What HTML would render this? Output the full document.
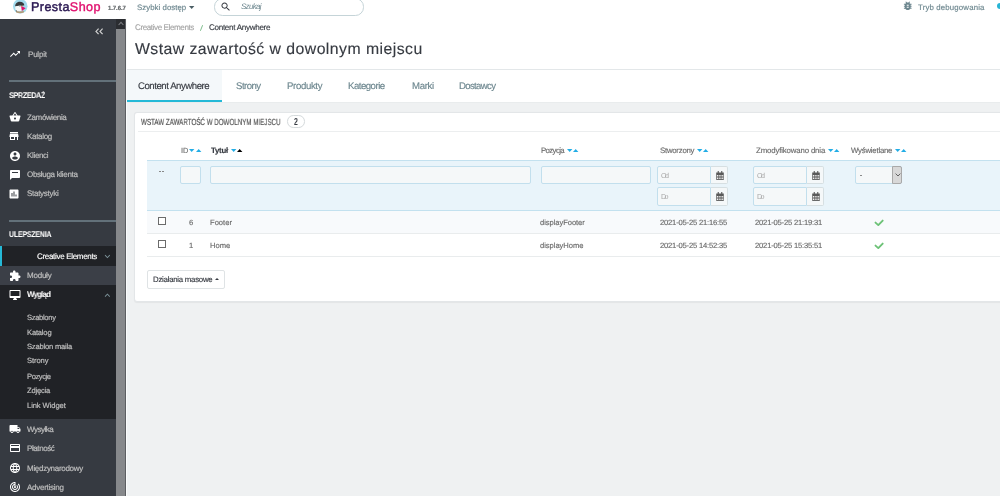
<!DOCTYPE html>
<html><head><meta charset="utf-8">
<title>Content Anywhere</title>
<style>
html,body{margin:0;padding:0;}
body{width:1000px;height:496px;overflow:hidden;position:relative;background:#eff1f2;font-family:"Liberation Sans",sans-serif;text-rendering:geometricPrecision;}
.tx{position:absolute;white-space:nowrap;z-index:5;will-change:transform;}
.shape{position:absolute;box-sizing:border-box;}
svg.shape{overflow:visible;}
.ic{fill:#fff;}
.inp{background:#f5f8f9;border:1px solid #c2dfed;border-radius:2px;}
.add{background:#f5f8f9;border:1px solid #d6dfe2;border-left:none;border-radius:0 2px 2px 0;}
.dn{width:0;height:0;border-left:2.6px solid transparent;border-right:2.6px solid transparent;border-top:2.8px solid #25b9d7;}
.up{width:0;height:0;border-left:2.6px solid transparent;border-right:2.6px solid transparent;border-bottom:2.8px solid #25b9d7;}
.cb{width:8px;height:8px;border:1px solid #6b6b6b;background:#fff;}
</style></head><body>
<!-- header -->
<div class="shape" style="left:0;top:0;width:1000px;height:19px;background:#fff;z-index:3"></div>
<!-- page header white -->
<div class="shape" style="left:126px;top:19px;width:874px;height:83.5px;background:#fff;"></div>
<div class="shape" style="left:126px;top:69px;width:874px;height:1px;background:#e3e7e9;"></div>
<div class="shape" style="left:127px;top:70px;width:95px;height:32px;background:#f4f8fa;"></div>
<div class="shape" style="left:126px;top:100px;width:96px;height:2px;background:#25b9d7;"></div>
<div class="shape" style="left:126px;top:102px;width:874px;height:1px;background:#e9eced;"></div>
<div class="shape" style="left:199.5px;top:24.5px;width:3px;height:6px;z-index:5"><svg width="3" height="6" viewBox="0 0 3 6" style="display:block"><path d="M2.6 0.2 L0.4 5.8" stroke="#70b580" stroke-width="0.9"/></svg></div>
<!-- sidebar -->
<div class="shape" style="left:0;top:19px;width:116px;height:477px;background:#363a41;"></div>
<div class="shape" style="left:9px;top:80px;width:107px;height:2px;background:#63717a;"></div>
<div class="shape" style="left:9px;top:220px;width:107px;height:2px;background:#63717a;"></div>
<div class="shape" style="left:0;top:246px;width:116px;height:19.5px;background:#202226;"></div>
<div class="shape" style="left:0;top:246px;width:2.2px;height:19.5px;background:#25b9d7;"></div>
<div class="shape" style="left:0;top:265.5px;width:116px;height:19.5px;background:#3b3f47;"></div>
<div class="shape" style="left:0;top:285px;width:116px;height:134px;background:#202226;"></div>
<!-- scrollbar -->
<div class="shape" style="left:116px;top:19px;width:9.3px;height:477px;background:#86888b;"></div>
<div class="shape" style="left:116px;top:19px;width:9.5px;height:9.6px;background:#2b2d31;"></div>
<svg class="shape" style="left:117.5px;top:21px" width="6" height="5" viewBox="0 0 6 5"><path d="M0.6 4 L3 1.4 L5.4 4" fill="none" stroke="#7a7c80" stroke-width="1.1"/></svg>
<div class="shape" style="left:125px;top:19px;width:1px;height:477px;background:#5c5e62;"></div><div class="shape" style="left:126px;top:19px;width:1px;height:477px;background:#fafbfb;"></div>
<!-- collapse -->
<svg class="shape" style="left:94.6px;top:27.6px" width="9" height="7" viewBox="0 0 9 7"><path d="M3.6 0.6 L1 3.4 L3.6 6.2 M7.6 0.6 L5 3.4 L7.6 6.2" fill="none" stroke="#d0d0d0" stroke-width="1.2"/></svg>
<!-- sidebar icons (material, 24 viewBox at 12px) -->
<svg class="shape ic" style="left:8.7px;top:48px" width="12" height="12" viewBox="0 0 24 24"><path d="M16 6l2.29 2.29-4.88 4.88-4-4L2 16.59 3.41 18l6-6 4 4 6.3-6.29L22 12V6z"/></svg>
<svg class="shape ic" style="left:8.5px;top:111px" width="12" height="12" viewBox="0 0 24 24"><path d="M17.21 9l-4.38-6.56c-.19-.28-.51-.42-.83-.42-.32 0-.64.14-.83.43L6.79 9H2c-.55 0-1 .45-1 1 0 .09.01.18.04.27l2.540 9.27c.23.84 1 1.46 1.92 1.46h13c.92 0 1.69-.62 1.93-1.46l2.54-9.27L23 10c0-.55-.45-1-1-1h-4.79zM9 9l3-4.4L15 9H9zm3 8c-1.1 0-2-.9-2-2s.9-2 2-2 2 .9 2 2-.9 2-2 2z"/></svg>
<svg class="shape ic" style="left:8.4px;top:130px" width="12" height="12" viewBox="0 0 24 24"><path d="M20 4H4v2h16V4zm1 10v-2l-1-5H4l-1 5v2h1v6h10v-6h4v6h2v-6h1zm-9 4H6v-4h6v4z"/></svg>
<svg class="shape ic" style="left:8.7px;top:149.8px" width="12" height="12" viewBox="0 0 24 24"><path d="M12 2C6.480 2 2 6.48 2 12s4.48 10 10 10 10-4.48 10-10S17.52 2 12 2zm0 3c1.66 0 3 1.34 3 3s-1.34 3-3 3-3-1.34-3-3 1.34-3 3-3zm0 14.2c-2.5 0-4.71-1.28-6-3.22.03-1.99 4-3.08 6-3.08 1.99 0 5.97 1.09 6 3.08-1.29 1.94-3.5 3.22-6 3.22z"/></svg>
<svg class="shape ic" style="left:8.7px;top:168.7px" width="12" height="12" viewBox="0 0 24 24"><path d="M20 2H4c-1.1 0-1.99.9-1.99 2L2 22l4-4h14c1.1 0 2-.9 2-2V4c0-1.1-.9-2-2-2zM18 8H6V6h12v2z"/></svg>
<svg class="shape ic" style="left:8.4px;top:187.5px" width="12" height="12" viewBox="0 0 24 24"><path d="M19 3H5c-1.1 0-2 .9-2 2v14c0 1.1.9 2 2 2h14c1.1 0 2-.9 2-2V5c0-1.1-.9-2-2-2zM9 17H7v-7h2v7zm4 0h-2V7h2v10zm4 0h-2v-4h2v4z"/></svg>
<svg class="shape ic" style="left:9px;top:269.8px" width="12" height="12" viewBox="0 0 24 24"><path d="M20.5 11H19V7c0-1.1-.9-2-2-2h-4V3.5C13 2.12 11.88 1 10.5 1S8 2.12 8 3.5V5H4c-1.1 0-1.99.9-1.99 2v3.8H3.5c1.49 0 2.7 1.21 2.7 2.7s-1.21 2.7-2.7 2.7H2V20c0 1.1.9 2 2 2h3.8v-1.5c0-1.490 1.21-2.7 2.7-2.7 1.49 0 2.7 1.21 2.7 2.7V22H17c1.1 0 2-.9 2-2v-4h1.5c1.38 0 2.5-1.12 2.5-2.5S21.88 11 20.5 11z"/></svg>
<svg class="shape ic" style="left:8.5px;top:289.2px" width="12" height="12" viewBox="0 0 24 24"><path d="M21 2H3c-1.1 0-2 .9-2 2v12c0 1.1.9 2 2 2h7l-2 3v1h8v-1l-2-3h7c1.1 0 2-.9 2-2V4c0-1.1-.9-2-2-2zm0 12H3V4h18v10z"/></svg>
<svg class="shape ic" style="left:9.4px;top:423.2px" width="12" height="12" viewBox="0 0 24 24"><path d="M20 8h-3V4H3c-1.1 0-2 .9-2 2v11h2c0 1.66 1.34 3 3 3s3-1.34 3-3h6c0 1.66 1.34 3 3 3s3-1.34 3-3h2v-5l-3-4zM6 18.5c-.83 0-1.5-.67-1.5-1.5s.67-1.5 1.5-1.5 1.5.67 1.5 1.5-.67 1.5-1.5 1.5zm13.5-9l1.96 2.5H17V9.5h2.5zm-1.5 9c-.83 0-1.5-.67-1.5-1.5s.67-1.5 1.5-1.5 1.5.67 1.5 1.5-.67 1.5-1.5 1.5z"/></svg>
<svg class="shape ic" style="left:8.5px;top:442.2px" width="12" height="12" viewBox="0 0 24 24"><path d="M20 4H4c-1.11 0-1.99.89-1.99 2L2 18c0 1.11.89 2 2 2h16c1.11 0 2-.89 2-2V6c0-1.11-.89-2-2-2zm0 14H4v-6h16v6zm0-10H4V6h16v2z"/></svg>
<svg class="shape ic" style="left:8.5px;top:461.8px" width="12" height="12" viewBox="0 0 24 24"><path d="M11.99 2C6.47 2 2 6.48 2 12s4.47 10 9.99 10C17.52 22 22 17.52 22 12S17.52 2 11.99 2zm6.93 6h-2.95c-.32-1.25-.78-2.45-1.38-3.56 1.84.63 3.37 1.91 4.33 3.56zM12 4.04c.83 1.2 1.48 2.53 1.91 3.96h-3.82c.43-1.43 1.08-2.76 1.91-3.96zM4.26 14C4.1 13.36 4 12.69 4 12s.1-1.36.26-2h3.38c-.08.66-.14 1.32-.14 2 0 .68.06 1.34.14 2H4.26zm.82 2h2.95c.32 1.25.78 2.45 1.38 3.56-1.84-.63-3.37-1.9-4.33-3.56zm2.95-8H5.08c.96-1.66 2.49-2.93 4.33-3.56C8.81 5.55 8.35 6.75 8.03 8zM12 19.96c-.83-1.2-1.48-2.53-1.91-3.96h3.82c-.43 1.43-1.08 2.76-1.910 3.96zM14.34 14H9.66c-.09-.66-.16-1.32-.16-2 0-.68.07-1.35.16-2h4.68c.09.65.16 1.32.16 2 0 .68-.07 1.34-.16 2zm.25 5.56c.6-1.11 1.06-2.31 1.38-3.56h2.95c-.96 1.65-2.49 2.93-4.33 3.56zM16.36 14c.08-.66.14-1.32.14-2 0-.68-.06-1.34-.14-2h3.38c.16.64.26 1.31.26 2s-.1 1.36-.26 2h-3.38z"/></svg>
<svg class="shape ic" style="left:8.5px;top:481px" width="12" height="12" viewBox="0 0 24 24"><path d="M19.07 4.93l-1.41 1.41C19.1 7.79 20 9.79 20 12c0 4.42-3.58 8-8 8s-8-3.58-8-8c0-4.08 3.05-7.44 7-7.93v2.02C8.16 6.57 6 9.03 6 12c0 3.31 2.69 6 6 6s6-2.69 6-6c0-1.66-.67-3.16-1.76-4.24l-1.41 1.41C15.55 9.9 16 10.9 16 12c0 2.21-1.79 4-4 4s-4-1.79-4-4c0-1.86 1.28-3.41 3-3.86v2.14c-.6.35-1 .98-1 1.72 0 1.1.9 2 2 2s2-.9 2-2c0-.74-.4-1.38-1-1.72V2h-1C6.48 2 2 6.48 2 12s4.48 10 10 10 10-4.48 10-10c0-2.76-1.12-5.26-2.93-7.07z"/></svg>
<svg class="shape" style="left:101.5px;top:250.6px" width="10.8" height="10.8" viewBox="0 0 24 24"><path fill="#7d939a" d="M7.41 8.59L12 13.17l4.590-4.58L18 10l-6 6-6-6 1.41-1.41z"/></svg>
<svg class="shape" style="left:101.5px;top:290.2px" width="10.8" height="10.8" viewBox="0 0 24 24"><path fill="#7d939a" d="M7.41 15.41L12 10.83l4.59 4.58L18 14l-6-6-6 6z"/></svg>
<!-- header content -->
<svg class="shape" style="left:12.6px;top:-0.9px;z-index:4" width="14.5" height="14.5" viewBox="0 0 24 24">
<circle cx="12" cy="12" r="12" fill="#a3dbed"/>
<path d="M3.6 12.5 C3.4 7.5 7 4.6 11.5 4.6 C15.5 4.6 18.4 6.8 18.8 10.5 L14.5 11.5 C11 10.5 7 11 3.6 12.5z" fill="#38393b"/>
<path d="M3.6 12.5 C7 11 11 10.5 14.5 11.5 L14.8 19.5 C11.5 20.5 7 20.3 4.6 19 C3.7 17 3.5 14.5 3.6 12.5z" fill="#f6f6f6"/>
<path d="M13.4 11 L20.9 15.3 L14.6 19.8z" fill="#e2116f"/>
<path d="M14.2 10.6 L15.6 10.8 L15.3 13.2 L14.3 12.8z" fill="#f1c46a"/>
<path d="M10 11.8 h2.8 v0.9 h-2.8z" fill="#8aa2ae"/>
<path d="M4.8 19.6 C8 21 14 21.2 18.2 19.6 L17.8 22.4 C14 24.2 9 24.2 5.4 22.4z" fill="#b59a76"/>
<path d="M4.6 18.6 L6.5 19.6 L6 20.6 L4.4 19.6z" fill="#333"/>
</svg>
<svg class="shape" style="left:189px;top:6px;z-index:4" width="5.4" height="3" viewBox="0 0 5.4 3"><path d="M0 0H5.4L2.7 3z" fill="#4a5d64"/></svg>
<div class="shape" style="left:213.8px;top:-1.7px;width:150px;height:17.2px;border:1px solid #c5d4d8;border-radius:8.6px;background:#fff;z-index:4"></div>
<svg class="shape" style="left:219.6px;top:1px;z-index:4" width="11.5" height="11.5" viewBox="0 0 24 24"><path fill="#363a41" d="M15.5 14h-.79l-.28-.27C15.41 12.59 16 11.11 16 9.5 16 5.910 13.09 3 9.5 3S3 5.91 3 9.5 5.91 16 9.5 16c1.61 0 3.09-.59 4.23-1.57l.27.28v.79l5 4.99L20.49 19l-4.99-5zm-6 0C7.01 14 5 11.99 5 9.5S7.01 5 9.5 5 14 7.01 14 9.5 11.99 14 9.5 14z"/></svg>
<svg class="shape" style="left:901.6px;top:0.4px;z-index:4" width="11.5" height="11.5" viewBox="0 0 24 24"><path fill="#6c868e" d="M20 8h-2.81c-.45-.78-1.07-1.45-1.82-1.96L17 4.41 15.59 3l-2.17 2.17C12.96 5.06 12.49 5 12 5c-.49 0-.96.06-1.41.17L8.41 3 7 4.41l1.62 1.63C7.88 6.55 7.26 7.22 6.81 8H4v2h2.09c-.05.33-.09.66-.09 1v1H4v2h2v1c0 .34.04.67.09 1H4v2h2.81c1.04 1.79 2.970 3 5.19 3s4.15-1.21 5.19-3H20v-2h-2.09c.05-.33.09-.66.09-1v-1h2v-2h-2v-1c0-.34-.04-.67-.09-1H20V8zm-6 8h-4v-2h4v2zm0-4h-4v-2h4v2z"/></svg>
<div class="shape" style="left:996.6px;top:2.8px;width:7px;height:6.3px;background:#28b5d5;border-radius:3.2px;z-index:4"></div>
<!-- panel -->
<div class="shape" style="left:134.2px;top:112.4px;width:880px;height:189.4px;background:#fff;border:1px solid #e3e6e8;border-radius:3px;box-shadow:0 0.5px 1px rgba(0,0,0,.05);"></div>
<div class="shape" style="left:137.6px;top:131.4px;width:870px;height:1px;background:#eceeef;"></div>
<div class="shape" style="left:287.1px;top:115px;width:17.7px;height:12.6px;border:1px solid #d5dadc;border-radius:6.3px;background:#fff;"></div>
<!-- filter row -->
<div class="shape" style="left:146.9px;top:160px;width:860px;height:50.5px;background:#e9f4fa;border-top:1px solid #c3e1ef;border-bottom:1px solid #c3e1ef;"></div>
<div class="shape" style="left:159px;top:171px;width:2px;height:0.9px;background:#888;"></div><div class="shape" style="left:161.8px;top:171px;width:2px;height:0.9px;background:#888;"></div>
<div class="shape inp" style="left:180.1px;top:165.7px;width:20.8px;height:18.6px;"></div>
<div class="shape inp" style="left:210.1px;top:165.7px;width:320.6px;height:18.6px;"></div>
<div class="shape inp" style="left:540.5px;top:165.7px;width:110.6px;height:18.6px;"></div>
<div class="shape inp" style="left:657.4px;top:166px;width:53.2px;height:18px;border-radius:2px 0 0 2px;"></div>
<div class="shape add" style="left:710.6px;top:166px;width:17.9px;height:18px;"></div>
<div class="shape inp" style="left:657.4px;top:187.4px;width:53.2px;height:18.4px;border-radius:2px 0 0 2px;"></div>
<div class="shape add" style="left:710.6px;top:187.4px;width:17.9px;height:18.4px;"></div>
<div class="shape inp" style="left:753.4px;top:166px;width:53.2px;height:18px;border-radius:2px 0 0 2px;"></div>
<div class="shape add" style="left:806.6px;top:166px;width:17.8px;height:18px;"></div>
<div class="shape inp" style="left:753.4px;top:187.4px;width:53.2px;height:18.4px;border-radius:2px 0 0 2px;"></div>
<div class="shape add" style="left:806.6px;top:187.4px;width:17.8px;height:18.4px;"></div>
<div class="shape inp" style="left:855.4px;top:166.4px;width:47px;height:17.2px;"></div>
<div class="shape" style="left:892.4px;top:166.4px;width:10px;height:17.2px;background:#d8d8d8;border:1px solid #a9a9a9;border-radius:0 2px 2px 0;"></div>
<svg class="shape" style="left:894.6px;top:172.5px" width="6" height="4" viewBox="0 0 6 4"><path d="M0.6 0.6 L3 3 L5.4 0.6" fill="none" stroke="#555" stroke-width="0.9"/></svg>
<div class="shape" style="left:860px;top:175px;width:1.8px;height:0.8px;background:#8a8a8a;"></div>
<!-- rows -->
<div class="shape" style="left:146.9px;top:210.5px;width:860px;height:22.8px;background:#f8fafc;"></div>
<div class="shape" style="left:146.9px;top:233px;width:860px;height:1px;background:#e9eced;"></div>
<div class="shape" style="left:146.9px;top:256px;width:860px;height:1px;background:#e9eced;"></div>
<div class="shape cb" style="left:158px;top:217.2px;"></div>
<div class="shape cb" style="left:158px;top:240.2px;"></div>
<svg class="shape" style="left:874px;top:219.4px" width="10" height="8" viewBox="0 0 10 8"><path d="M1.5 3.6 L4.3 6.1 L8.7 1.6" fill="none" stroke="#6dc277" stroke-width="1.9" stroke-linecap="round" stroke-linejoin="round"/></svg>
<svg class="shape" style="left:874px;top:242.4px" width="10" height="8" viewBox="0 0 10 8"><path d="M1.5 3.6 L4.3 6.1 L8.7 1.6" fill="none" stroke="#6dc277" stroke-width="1.9" stroke-linecap="round" stroke-linejoin="round"/></svg>
<!-- bulk button -->
<div class="shape" style="left:147.1px;top:270.2px;width:78px;height:18.8px;background:#fff;border:1px solid #dfe3e5;border-radius:2px;"></div>
<div class="shape" style="left:215px;top:278.2px;width:0;height:0;border-left:2.2px solid transparent;border-right:2.2px solid transparent;border-bottom:2.4px solid #363a41;"></div>
<svg class="shape" style="left:189.3px;top:148.8px" width="5.4" height="3" viewBox="0 0 5.4 3"><path d="M0 0H5.4L2.7 3z" fill="#22ade6"/></svg>
<svg class="shape" style="left:196.0px;top:148.8px" width="5.4" height="3" viewBox="0 0 5.4 3"><path d="M0 3H5.4L2.7 0z" fill="#22ade6"/></svg>
<svg class="shape" style="left:231.0px;top:148.8px" width="5.4" height="3" viewBox="0 0 5.4 3"><path d="M0 0H5.4L2.7 3z" fill="#22ade6"/></svg>
<svg class="shape" style="left:236.9px;top:148.8px" width="5.4" height="3" viewBox="0 0 5.4 3"><path d="M0 3H5.4L2.7 0z" fill="#000"/></svg>
<svg class="shape" style="left:567.3px;top:148.8px" width="5.4" height="3" viewBox="0 0 5.4 3"><path d="M0 0H5.4L2.7 3z" fill="#22ade6"/></svg>
<svg class="shape" style="left:573.4px;top:148.8px" width="5.4" height="3" viewBox="0 0 5.4 3"><path d="M0 3H5.4L2.7 0z" fill="#22ade6"/></svg>
<svg class="shape" style="left:697.2px;top:148.8px" width="5.4" height="3" viewBox="0 0 5.4 3"><path d="M0 0H5.4L2.7 3z" fill="#22ade6"/></svg>
<svg class="shape" style="left:703.0px;top:148.8px" width="5.4" height="3" viewBox="0 0 5.4 3"><path d="M0 3H5.4L2.7 0z" fill="#22ade6"/></svg>
<svg class="shape" style="left:827.6px;top:148.8px" width="5.4" height="3" viewBox="0 0 5.4 3"><path d="M0 0H5.4L2.7 3z" fill="#22ade6"/></svg>
<svg class="shape" style="left:833.6px;top:148.8px" width="5.4" height="3" viewBox="0 0 5.4 3"><path d="M0 3H5.4L2.7 0z" fill="#22ade6"/></svg>
<svg class="shape" style="left:895.0px;top:148.8px" width="5.4" height="3" viewBox="0 0 5.4 3"><path d="M0 0H5.4L2.7 3z" fill="#22ade6"/></svg>
<svg class="shape" style="left:901.0px;top:148.8px" width="5.4" height="3" viewBox="0 0 5.4 3"><path d="M0 3H5.4L2.7 0z" fill="#22ade6"/></svg>
<svg class="shape" style="left:716.1px;top:170.8px" width="8" height="9" viewBox="0 0 8 9"><path d="M0.2 1.5 H7.8 V8.9 H0.2z" fill="#5a5a5a"/><path d="M0.9 3.9h1.1v1h-1.1zM2.65 3.9h1.1v1h-1.1zM4.4 3.9h1.1v1h-1.1zM6.15 3.9h1.1v1h-1.1zM0.9 5.5h1.1v1h-1.1zM2.65 5.5h1.1v1h-1.1zM4.4 5.5h1.1v1h-1.1zM6.15 5.5h1.1v1h-1.1zM0.9 7.1h1.1v1h-1.1zM2.65 7.1h1.1v1h-1.1zM4.4 7.1h1.1v1h-1.1zM6.15 7.1h1.1v1h-1.1z" fill="#f2f2f2"/><rect x="1.7" y="0" width="1.1" height="2.4" fill="#5a5a5a"/><rect x="5.2" y="0" width="1.1" height="2.4" fill="#5a5a5a"/></svg>
<svg class="shape" style="left:716.1px;top:192.3px" width="8" height="9" viewBox="0 0 8 9"><path d="M0.2 1.5 H7.8 V8.9 H0.2z" fill="#5a5a5a"/><path d="M0.9 3.9h1.1v1h-1.1zM2.65 3.9h1.1v1h-1.1zM4.4 3.9h1.1v1h-1.1zM6.15 3.9h1.1v1h-1.1zM0.9 5.5h1.1v1h-1.1zM2.65 5.5h1.1v1h-1.1zM4.4 5.5h1.1v1h-1.1zM6.15 5.5h1.1v1h-1.1zM0.9 7.1h1.1v1h-1.1zM2.65 7.1h1.1v1h-1.1zM4.4 7.1h1.1v1h-1.1zM6.15 7.1h1.1v1h-1.1z" fill="#f2f2f2"/><rect x="1.7" y="0" width="1.1" height="2.4" fill="#5a5a5a"/><rect x="5.2" y="0" width="1.1" height="2.4" fill="#5a5a5a"/></svg>
<svg class="shape" style="left:812.1px;top:170.8px" width="8" height="9" viewBox="0 0 8 9"><path d="M0.2 1.5 H7.8 V8.9 H0.2z" fill="#5a5a5a"/><path d="M0.9 3.9h1.1v1h-1.1zM2.65 3.9h1.1v1h-1.1zM4.4 3.9h1.1v1h-1.1zM6.15 3.9h1.1v1h-1.1zM0.9 5.5h1.1v1h-1.1zM2.65 5.5h1.1v1h-1.1zM4.4 5.5h1.1v1h-1.1zM6.15 5.5h1.1v1h-1.1zM0.9 7.1h1.1v1h-1.1zM2.65 7.1h1.1v1h-1.1zM4.4 7.1h1.1v1h-1.1zM6.15 7.1h1.1v1h-1.1z" fill="#f2f2f2"/><rect x="1.7" y="0" width="1.1" height="2.4" fill="#5a5a5a"/><rect x="5.2" y="0" width="1.1" height="2.4" fill="#5a5a5a"/></svg>
<svg class="shape" style="left:812.1px;top:192.3px" width="8" height="9" viewBox="0 0 8 9"><path d="M0.2 1.5 H7.8 V8.9 H0.2z" fill="#5a5a5a"/><path d="M0.9 3.9h1.1v1h-1.1zM2.65 3.9h1.1v1h-1.1zM4.4 3.9h1.1v1h-1.1zM6.15 3.9h1.1v1h-1.1zM0.9 5.5h1.1v1h-1.1zM2.65 5.5h1.1v1h-1.1zM4.4 5.5h1.1v1h-1.1zM6.15 5.5h1.1v1h-1.1zM0.9 7.1h1.1v1h-1.1zM2.65 7.1h1.1v1h-1.1zM4.4 7.1h1.1v1h-1.1zM6.15 7.1h1.1v1h-1.1z" fill="#f2f2f2"/><rect x="1.7" y="0" width="1.1" height="2.4" fill="#5a5a5a"/><rect x="5.2" y="0" width="1.1" height="2.4" fill="#5a5a5a"/></svg>
<div class="tx" id="t_presta" style="left:30.52px;top:1.10px;font-size:12.60px;line-height:12.60px;color:#2a1852;letter-spacing:0.409px;-webkit-text-stroke:0.45px #2a1852;">Presta<span style="color:#e0106e;-webkit-text-stroke:0.4px #e0106e">Shop</span></div>
<div class="tx" id="t_ver" style="left:108.00px;top:6.01px;font-size:6.00px;line-height:6.00px;color:#5f6366;font-weight:700;letter-spacing:-0.080px;-webkit-text-stroke-width:0.15px;">1.7.6.7</div>
<div class="tx" id="t_quick" style="left:137.00px;top:3.60px;font-size:7.80px;line-height:7.80px;color:#6c868e;letter-spacing:0.053px;-webkit-text-stroke-width:0.15px;">Szybki dostęp</div>
<div class="tx" id="t_search" style="left:241.37px;top:3.10px;font-size:7.90px;line-height:7.90px;color:#6c868e;letter-spacing:-0.656px;font-style:italic;">Szukaj</div>
<div class="tx" id="t_debug" style="left:918.26px;top:3.60px;font-size:7.80px;line-height:7.80px;color:#6c868e;letter-spacing:0.171px;-webkit-text-stroke-width:0.15px;">Tryb debugowania</div>
<div class="tx" id="t_bc1" style="left:134.52px;top:24.00px;font-size:8.10px;line-height:8.10px;color:#a5a5a5;letter-spacing:-0.425px;-webkit-text-stroke-width:0.15px;">Creative Elements</div>
<div class="tx" id="t_bc3" style="left:209.48px;top:24.00px;font-size:8.10px;line-height:8.10px;color:#363a41;letter-spacing:-0.309px;-webkit-text-stroke-width:0.15px;">Content Anywhere</div>
<div class="tx" id="t_title" style="left:134.52px;top:42.21px;font-size:15.80px;line-height:15.80px;color:#363a41;letter-spacing:0.456px;-webkit-text-stroke-width:0.15px;">Wstaw zawartość w dowolnym miejscu</div>
<div class="tx" id="t_ph" style="left:141.00px;top:117.71px;font-size:8.90px;line-height:8.90px;color:#555555;transform:scaleX(0.7005);transform-origin:0 0;-webkit-text-stroke:0.2px #555;">WSTAW ZAWARTOŚĆ W DOWOLNYM MIEJSCU</div>
<div class="tx" id="t_badge" style="left:293.63px;top:117.91px;font-size:10.00px;line-height:10.00px;color:#363a41;font-weight:700;transform:scaleX(0.6852);transform-origin:0 0;">2</div>
<div class="tx" id="t_od1" style="left:660.53px;top:171.60px;font-size:7.20px;line-height:7.20px;color:#a8a8a8;letter-spacing:-1.600px;">Od</div>
<div class="tx" id="t_do1" style="left:660.53px;top:193.21px;font-size:7.20px;line-height:7.20px;color:#a8a8a8;letter-spacing:-1.600px;">Do</div>
<div class="tx" id="t_od2" style="left:756.53px;top:171.60px;font-size:7.20px;line-height:7.20px;color:#a8a8a8;letter-spacing:-1.600px;">Od</div>
<div class="tx" id="t_do2" style="left:756.53px;top:193.21px;font-size:7.20px;line-height:7.20px;color:#a8a8a8;letter-spacing:-1.600px;">Do</div>
<div class="tx" id="t_tab1" style="left:138.11px;top:82.01px;font-size:9.60px;line-height:9.60px;color:#363a41;letter-spacing:-0.448px;-webkit-text-stroke-width:0.15px;">Content Anywhere</div>
<div class="tx" id="t_tab2" style="left:235.74px;top:82.01px;font-size:9.60px;line-height:9.60px;color:#6c868e;letter-spacing:-0.512px;-webkit-text-stroke-width:0.15px;">Strony</div>
<div class="tx" id="t_tab3" style="left:286.63px;top:82.01px;font-size:9.60px;line-height:9.60px;color:#6c868e;letter-spacing:-0.343px;-webkit-text-stroke-width:0.15px;">Produkty</div>
<div class="tx" id="t_tab4" style="left:348.48px;top:82.01px;font-size:9.60px;line-height:9.60px;color:#6c868e;letter-spacing:-0.490px;-webkit-text-stroke-width:0.15px;">Kategorie</div>
<div class="tx" id="t_tab5" style="left:411.74px;top:82.01px;font-size:9.60px;line-height:9.60px;color:#6c868e;letter-spacing:-0.340px;-webkit-text-stroke-width:0.15px;">Marki</div>
<div class="tx" id="t_tab6" style="left:459.37px;top:82.01px;font-size:9.60px;line-height:9.60px;color:#6c868e;letter-spacing:-0.663px;-webkit-text-stroke-width:0.15px;">Dostawcy</div>
<div class="tx" id="t_th_id" style="left:180.52px;top:147.31px;font-size:7.40px;line-height:7.40px;color:#707070;-webkit-text-stroke-width:0.15px;">ID</div>
<div class="tx" id="t_th_ti" style="left:211.00px;top:147.31px;font-size:7.80px;line-height:7.80px;color:#363a41;font-weight:700;letter-spacing:-0.200px;-webkit-text-stroke-width:0.15px;">Tytuł</div>
<div class="tx" id="t_th_po" style="left:540.52px;top:147.31px;font-size:7.80px;line-height:7.80px;color:#6c6c6c;letter-spacing:-0.613px;-webkit-text-stroke-width:0.15px;">Pozycja</div>
<div class="tx" id="t_th_st" style="left:660.26px;top:147.31px;font-size:7.80px;line-height:7.80px;color:#6c6c6c;letter-spacing:-0.240px;-webkit-text-stroke-width:0.15px;">Stworzony</div>
<div class="tx" id="t_th_zm" style="left:756.00px;top:147.31px;font-size:7.80px;line-height:7.80px;color:#6c6c6c;letter-spacing:-0.132px;-webkit-text-stroke-width:0.15px;">Zmodyfikowano dnia</div>
<div class="tx" id="t_th_wy" style="left:851.26px;top:147.31px;font-size:7.80px;line-height:7.80px;color:#6c6c6c;letter-spacing:-0.224px;-webkit-text-stroke-width:0.15px;">Wyświetlane</div>
<div class="tx" id="t_r1_id" style="left:188.63px;top:218.70px;font-size:7.60px;line-height:7.60px;color:#6c6c6c;-webkit-text-stroke-width:0.15px;">6</div>
<div class="tx" id="t_r1_ti" style="left:210.48px;top:218.70px;font-size:7.60px;line-height:7.60px;color:#6c6c6c;-webkit-text-stroke-width:0.15px;">Footer</div>
<div class="tx" id="t_r1_po" style="left:540.11px;top:218.70px;font-size:7.60px;line-height:7.60px;color:#6c6c6c;letter-spacing:-0.067px;-webkit-text-stroke-width:0.15px;">displayFooter</div>
<div class="tx" id="t_r1_st" style="left:659.74px;top:218.70px;font-size:7.60px;line-height:7.60px;color:#6c6c6c;letter-spacing:-0.187px;-webkit-text-stroke-width:0.15px;">2021-05-25 21:16:55</div>
<div class="tx" id="t_r1_zm" style="left:755.26px;top:218.70px;font-size:7.60px;line-height:7.60px;color:#6c6c6c;letter-spacing:-0.178px;-webkit-text-stroke-width:0.15px;">2021-05-25 21:19:31</div>
<div class="tx" id="t_r2_id" style="left:188.63px;top:241.81px;font-size:7.60px;line-height:7.60px;color:#6c6c6c;-webkit-text-stroke-width:0.15px;">1</div>
<div class="tx" id="t_r2_ti" style="left:210.48px;top:241.81px;font-size:7.60px;line-height:7.60px;color:#6c6c6c;-webkit-text-stroke-width:0.15px;">Home</div>
<div class="tx" id="t_r2_po" style="left:540.11px;top:241.81px;font-size:7.60px;line-height:7.60px;color:#6c6c6c;letter-spacing:-0.048px;-webkit-text-stroke-width:0.15px;">displayHome</div>
<div class="tx" id="t_r2_st" style="left:659.74px;top:241.81px;font-size:7.60px;line-height:7.60px;color:#6c6c6c;letter-spacing:-0.187px;-webkit-text-stroke-width:0.15px;">2021-05-25 14:52:35</div>
<div class="tx" id="t_r2_zm" style="left:755.26px;top:241.81px;font-size:7.60px;line-height:7.60px;color:#6c6c6c;letter-spacing:-0.178px;-webkit-text-stroke-width:0.15px;">2021-05-25 15:35:51</div>
<div class="tx" id="t_bulk" style="left:152.52px;top:276.01px;font-size:7.80px;line-height:7.80px;color:#363a41;letter-spacing:-0.240px;-webkit-text-stroke-width:0.15px;">Działania masowe</div>
<div class="tx" id="s_pulpit" style="left:27.62px;top:50.91px;font-size:8.00px;line-height:8.00px;color:#bebebe;letter-spacing:-0.208px;-webkit-text-stroke-width:0.2px;">Pulpit</div>
<div class="tx" id="s_sprz" style="left:9.00px;top:91.61px;font-size:8.20px;line-height:8.20px;color:#ffffff;font-weight:700;letter-spacing:-0.457px;transform:scaleX(0.8867);transform-origin:0 0;">SPRZEDAŻ</div>
<div class="tx" id="s_a0" style="left:26.74px;top:113.61px;font-size:8.00px;line-height:8.00px;color:#bebebe;letter-spacing:-0.373px;-webkit-text-stroke-width:0.2px;">Zamówienia</div>
<div class="tx" id="s_a1" style="left:26.74px;top:133.01px;font-size:8.00px;line-height:8.00px;color:#bebebe;letter-spacing:-0.320px;-webkit-text-stroke-width:0.2px;">Katalog</div>
<div class="tx" id="s_a2" style="left:26.74px;top:152.01px;font-size:8.00px;line-height:8.00px;color:#bebebe;letter-spacing:-0.333px;-webkit-text-stroke-width:0.2px;">Klienci</div>
<div class="tx" id="s_a3" style="left:26.74px;top:170.91px;font-size:8.00px;line-height:8.00px;color:#bebebe;letter-spacing:-0.297px;-webkit-text-stroke-width:0.2px;">Obsługa klienta</div>
<div class="tx" id="s_a4" style="left:26.74px;top:190.01px;font-size:8.00px;line-height:8.00px;color:#bebebe;letter-spacing:-0.284px;-webkit-text-stroke-width:0.2px;">Statystyki</div>
<div class="tx" id="s_ulep" style="left:9.00px;top:231.00px;font-size:8.20px;line-height:8.20px;color:#ffffff;font-weight:700;letter-spacing:-0.249px;transform:scaleX(0.8562);transform-origin:0 0;">ULEPSZENIA</div>
<div class="tx" id="s_ce" style="left:37.48px;top:253.01px;font-size:8.00px;line-height:8.00px;color:#ffffff;letter-spacing:-0.315px;-webkit-text-stroke-width:0.15px;">Creative Elements</div>
<div class="tx" id="s_mod" style="left:26.74px;top:272.41px;font-size:8.00px;line-height:8.00px;color:#bebebe;letter-spacing:-0.224px;-webkit-text-stroke-width:0.2px;">Moduły</div>
<div class="tx" id="s_wyg" style="left:26.74px;top:290.01px;font-size:8.30px;line-height:8.30px;color:#ffffff;font-weight:700;letter-spacing:-0.864px;transform:scaleX(0.9568);transform-origin:0 0;">Wygląd</div>
<div class="tx" id="s_b0" style="left:27.24px;top:313.70px;font-size:7.60px;line-height:7.60px;color:#bebebe;letter-spacing:-0.331px;-webkit-text-stroke-width:0.2px;">Szablony</div>
<div class="tx" id="s_b1" style="left:27.24px;top:328.81px;font-size:7.60px;line-height:7.60px;color:#bebebe;letter-spacing:-0.187px;-webkit-text-stroke-width:0.2px;">Katalog</div>
<div class="tx" id="s_b2" style="left:27.24px;top:343.31px;font-size:7.60px;line-height:7.60px;color:#bebebe;letter-spacing:-0.200px;-webkit-text-stroke-width:0.2px;">Szablon maila</div>
<div class="tx" id="s_b3" style="left:27.24px;top:357.20px;font-size:7.60px;line-height:7.60px;color:#bebebe;letter-spacing:-0.080px;-webkit-text-stroke-width:0.2px;">Strony</div>
<div class="tx" id="s_b4" style="left:27.24px;top:372.70px;font-size:7.60px;line-height:7.60px;color:#bebebe;letter-spacing:-0.427px;-webkit-text-stroke-width:0.2px;">Pozycje</div>
<div class="tx" id="s_b5" style="left:27.24px;top:386.70px;font-size:7.60px;line-height:7.60px;color:#bebebe;letter-spacing:-0.213px;-webkit-text-stroke-width:0.2px;">Zdjęcia</div>
<div class="tx" id="s_b6" style="left:27.24px;top:401.50px;font-size:7.60px;line-height:7.60px;color:#bebebe;letter-spacing:-0.088px;-webkit-text-stroke-width:0.2px;">Link Widget</div>
<div class="tx" id="s_c0" style="left:26.74px;top:426.11px;font-size:8.00px;line-height:8.00px;color:#bebebe;letter-spacing:-0.493px;-webkit-text-stroke-width:0.2px;">Wysyłka</div>
<div class="tx" id="s_c1" style="left:26.74px;top:445.20px;font-size:8.00px;line-height:8.00px;color:#bebebe;letter-spacing:-0.411px;-webkit-text-stroke-width:0.2px;">Płatność</div>
<div class="tx" id="s_c2" style="left:26.74px;top:464.82px;font-size:8.00px;line-height:8.00px;color:#bebebe;letter-spacing:-0.289px;-webkit-text-stroke-width:0.2px;">Międzynarodowy</div>
<div class="tx" id="s_c3" style="left:26.74px;top:483.91px;font-size:8.00px;line-height:8.00px;color:#bebebe;letter-spacing:-0.264px;-webkit-text-stroke-width:0.2px;">Advertising</div>
</body></html>
